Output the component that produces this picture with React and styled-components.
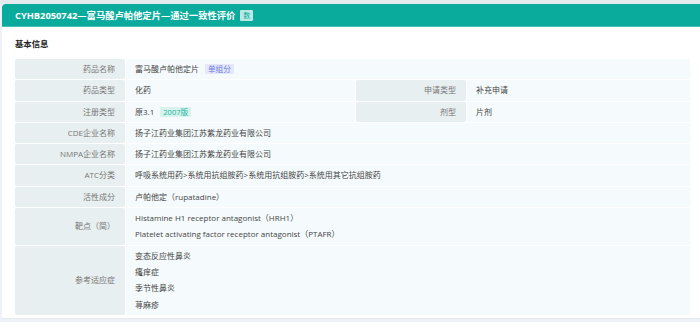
import React from "react";
import styled, { createGlobalStyle } from "styled-components";

const GlobalStyle = createGlobalStyle`
  html, body {
    margin: 0;
    padding: 0;
    background: #eef2f6;
    overflow: hidden;
  }
  body {
    font-family: "Open Sans", "Noto Sans CJK SC", sans-serif;
  }
`;

const Page = styled.div`
  width: 700px;
  height: 322px;
  padding: 4px 0 0 2px;
  box-sizing: border-box;
  background: linear-gradient(#e4e9ed 0 4px, #eef2f6 4px);
`;

const Card = styled.div`
  width: 710px;
  background: #fff;
  border-top-left-radius: 4px;
  overflow: hidden;
  border-bottom: 1px solid #e6eaee;
`;

const Header = styled.div`
  height: 23px;
  display: flex;
  align-items: center;
  gap: 5px;
  padding-left: 13px;
  background: #0aab9d;
  border-bottom: 1px solid #43c2b6;
  box-sizing: border-box;
  color: #fff;
  font-size: 9.3px;
  font-weight: 700;
`;

const Badge = styled.span`
  display: inline-flex;
  align-items: center;
  justify-content: center;
  width: 13px;
  height: 11px;
  background: rgba(255, 255, 255, 0.72);
  color: #0aab9d;
  font-size: 7px;
  font-weight: 400;
  border-radius: 1px;
`;

const Body = styled.div`
  padding: 0 22px 3px 13px;
`;

const SectionTitle = styled.div`
  height: 32px;
  display: flex;
  align-items: center;
  font-size: 8.4px;
  font-weight: 700;
  color: #222;
`;

const Table = styled.div`
  display: grid;
  grid-template-columns: 110px 229px 110px 1fr;
  gap: 1px;
  font-size: 8px;
  line-height: 16.3px;
`;

const Label = styled.div`
  background: #e7eff0;
  color: #777;
  text-align: right;
  padding: 2px 10px;
  border-radius: 2px;
  display: flex;
  align-items: center;
  justify-content: flex-end;
`;

const Value = styled.div`
  background: #f5fbfc;
  color: #444;
  padding: 2px 9px;
  grid-column: ${({ $span }) => ($span ? `span ${$span}` : "auto")};
  display: flex;
  flex-direction: column;
  justify-content: center;
`;

const Line = styled.div`
  display: flex;
  align-items: center;
  gap: 6px;
`;

const Tag = styled.span`
  display: inline-flex;
  align-items: center;
  height: 10px;
  padding: 0 3px;
  border-radius: 1px;
  font-size: 7.6px;
  background: ${({ $tone }) => ($tone === "blue" ? "#e5e8fa" : "#d8f3ed")};
  color: ${({ $tone }) => ($tone === "blue" ? "#6d7be0" : "#17b39b")};
`;

const rows = [
  { label: "CDE企业名称", lines: ["扬子江药业集团江苏紫龙药业有限公司"] },
  { label: "NMPA企业名称", lines: ["扬子江药业集团江苏紫龙药业有限公司"] },
  { label: "ATC分类", lines: ["呼吸系统用药>系统用抗组胺药>系统用抗组胺药>系统用其它抗组胺药"] },
  { label: "活性成分", lines: ["卢帕他定（rupatadine）"] },
  {
    label: "靶点（简）",
    lines: [
      "Histamine H1 receptor antagonist（HRH1）",
      "Platelet activating factor receptor antagonist（PTAFR）",
    ],
  },
  { label: "参考适应症", lines: ["变态反应性鼻炎", "瘙痒症", "季节性鼻炎", "荨麻疹"] },
];

export default function App() {
  return (
    <>
      <GlobalStyle />
      <Page>
        <Card>
          <Header>
            CYHB2050742—富马酸卢帕他定片—通过一致性评价
            <Badge>数</Badge>
          </Header>
          <Body>
            <SectionTitle>基本信息</SectionTitle>
            <Table>
              <Label>药品名称</Label>
              <Value $span={3}>
                <Line>
                  富马酸卢帕他定片 <Tag $tone="blue">单组分</Tag>
                </Line>
              </Value>

              <Label>药品类型</Label>
              <Value>化药</Value>
              <Label>申请类型</Label>
              <Value>补充申请</Value>

              <Label>注册类型</Label>
              <Value>
                <Line>
                  原3.1 <Tag>2007版</Tag>
                </Line>
              </Value>
              <Label>剂型</Label>
              <Value>片剂</Value>

              {rows.map(row => (
                <React.Fragment key={row.label}>
                  <Label>{row.label}</Label>
                  <Value $span={3}>
                    {row.lines.map(line => (
                      <div key={line}>{line}</div>
                    ))}
                  </Value>
                </React.Fragment>
              ))}
            </Table>
          </Body>
        </Card>
      </Page>
    </>
  );
}
